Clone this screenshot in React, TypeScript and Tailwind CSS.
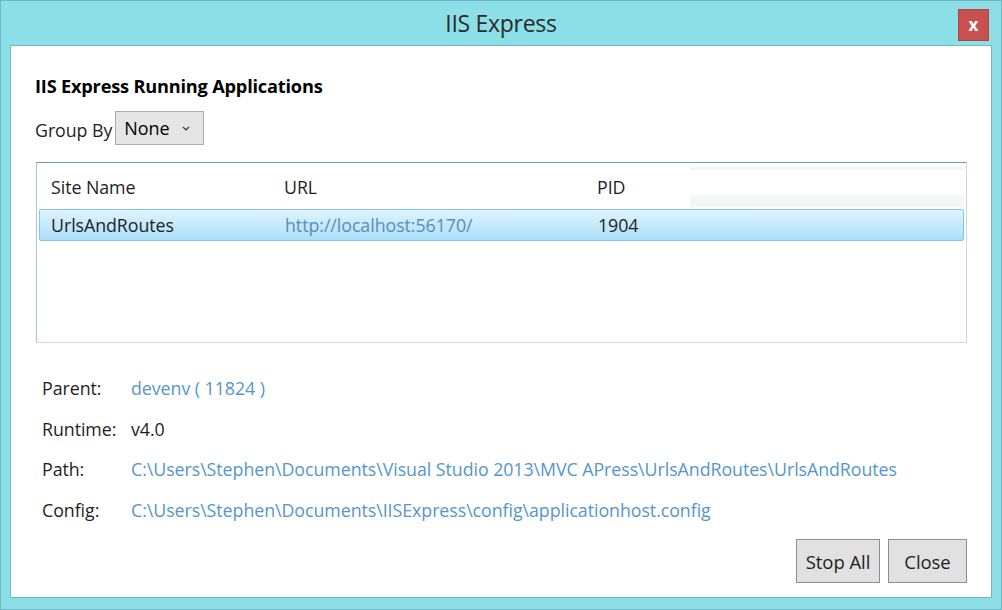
const font = { fontFamily: '"Open Sans", "Noto Sans", sans-serif' }

function DetailRow({ label, value, link = true }: { label: string; value: string; link?: boolean }) {
  return (
    <div className="flex h-[40.6px] items-center">
      <span className="w-[89px] text-[#1e1e1e]">{label}</span>
      <span className={link ? 'text-[#5596cc]' : 'text-[#1e1e1e]'}>{value}</span>
    </div>
  )
}

export default function App() {
  return (
    <div
      className="flex h-[610px] w-[1002px] flex-col border border-[#6cb8c6] bg-[#8ddfe7] text-[17.8px] tracking-[-0.05px]"
      style={font}
    >
      {/* title bar */}
      <div className="relative flex h-[44px] shrink-0 items-center justify-center">
        <span className="text-[23px] font-normal tracking-[-0.3px] text-[#2b2b2b]">IIS Express</span>
        <div className="absolute top-[8px] right-[12px] flex h-[32px] w-[31px] items-center justify-center border border-[#b34442] bg-[#c75050] text-[17px] font-bold text-white">
          x
        </div>
      </div>

      {/* client area */}
      <div className="mx-[9px] mb-[11px] flex flex-1 flex-col border border-[#6fb7c5] bg-white px-[24px] pt-[28px]">
        <h1 className="text-[18.2px] leading-[24px] font-bold tracking-[-0.2px] text-black">
          IIS Express Running Applications
        </h1>

        <div className="mt-[13px] flex items-end gap-[3px]">
          <span className="pb-[1px] text-[#1e1e1e]">Group By</span>
          <div className="flex h-[34px] w-[89px] items-center justify-between border border-[#acacac] bg-[#e5e5e5] pr-[13px] pl-[8px]">
            <span className="text-[18px] text-black">None</span>
            <svg width="8" height="5" viewBox="0 0 8 5">
              <path d="M1 1 L4 4 L7 1" fill="none" stroke="#333" strokeWidth="1.2" />
            </svg>
          </div>
        </div>

        {/* list view */}
        <div className="mt-[17px] ml-[1px] h-[181px] w-[931px] border border-t-[#6f98c4] border-r-[#c4d9ec] border-b-[#c4d9ec] border-l-[#a9c4e0] p-[2px]">
          <div className="flex h-[44px] items-center text-[#1e1e1e]">
            <span className="w-[245px] pl-[12px]">Site Name</span>
            <span className="w-[313px]">URL</span>
            <span className="w-[93px]">PID</span>
            <div className="flex h-[42px] flex-1 flex-col justify-between self-start pt-[2px]">
              <div className="h-[3px] bg-[#f3f4f5]" />
              <div className="h-[12px] bg-[#f5f6f7]" />
            </div>
          </div>
          <div className="flex h-[32px] items-center rounded-[2px] border border-[#84c3ea] bg-gradient-to-b from-[#e0f4fe] to-[#a9dff9] text-[#1e1e1e]">
            <span className="w-[245px] pl-[11px]">UrlsAndRoutes</span>
            <span className="w-[313px] text-[#5c8db5]">http://localhost:56170/</span>
            <span>1904</span>
          </div>
        </div>

        {/* details */}
        <div className="mt-[25px] ml-[7px] flex flex-col">
          <DetailRow label="Parent:" value="devenv ( 11824 )" />
          <DetailRow label="Runtime:" value="v4.0" link={false} />
          <DetailRow
            label="Path:"
            value="C:\Users\Stephen\Documents\Visual Studio 2013\MVC APress\UrlsAndRoutes\UrlsAndRoutes"
          />
          <DetailRow label="Config:" value="C:\Users\Stephen\Documents\IISExpress\config\applicationhost.config" />
        </div>

        <div className="mt-[9px] flex justify-end gap-[8px]">
          <button className="h-[44px] w-[84px] border border-[#8f8f8f] bg-[#e1e1e1] text-[18.5px] text-[#1e1e1e]">
            Stop All
          </button>
          <button className="h-[44px] w-[79px] border border-[#8f8f8f] bg-[#e1e1e1] text-[18.5px] text-[#1e1e1e]">
            Close
          </button>
        </div>
      </div>
    </div>
  )
}
